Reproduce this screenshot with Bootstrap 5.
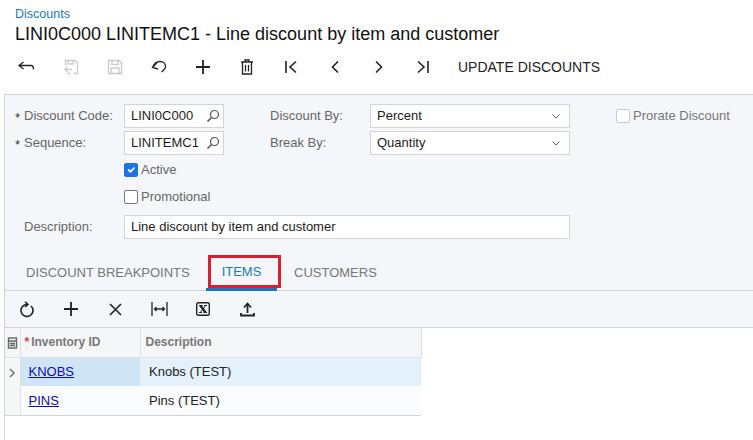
<!DOCTYPE html>
<html lang="en">
<head>
<meta charset="utf-8">
<title>Discounts</title>
<link href="https://cdn.jsdelivr.net/npm/bootstrap@5.3.0/dist/css/bootstrap.min.css" rel="stylesheet">
<style>
html,body{height:440px;overflow:hidden}
body{font-family:"Liberation Sans",Arial,sans-serif;font-size:13px;color:#212121;background:#fff}
.crumb{padding:7px 0 0 15px;height:45px}
.crumb-link{display:block;font-size:12.5px;line-height:15px;color:#1a7bb9;text-decoration:none}
.page-title{font-size:18px;line-height:24px;font-weight:400;color:#111;margin:0}
.top-bar{height:44px;padding-left:5px;margin-bottom:5px}
.tool{width:44px;height:36px;padding:0;border:0;background:none;display:flex;align-items:center;justify-content:center;color:#222}
.tool svg{fill:none;stroke:currentColor;stroke-width:1.3}
.tool .heavy{stroke-width:1.8}
.tool .mid{stroke-width:1.6}
.tool.off{color:#c9cbcd}
.top-action{margin-left:13px;font-size:14px;color:#222;background:none;border:0;padding:0}
.sheet{margin-left:4px;border-left:1px solid #d2d4d6;height:346px;display:flex;flex-direction:column}
.form-pane{background:#f4f6f9;border-top:1px solid #d2d4d6;padding:9px 0 0 10px;height:160px;flex:none}
.f-row{height:27px;align-items:flex-start}
.f-row.last{margin-top:3px}
.f-label{width:109px;line-height:24px;color:#666;font-size:13px;padding-left:9px;position:relative;flex:none}
.f-label.req::before{content:"*";position:absolute;left:0;top:2px;color:#333}
.f-input{height:24px;border:1px solid #d2d4d6;background:#fff;line-height:22px;padding-left:6px;font-size:13px;color:#1c1c1c;display:flex;align-items:center;justify-content:space-between;flex:none}
.f-lookup{width:100px;padding-right:3px}
.f-second{width:100px;margin-left:46px;line-height:24px;color:#666;font-size:13px;flex:none}
.f-select{width:200px;padding-right:9px}
.f-wide{width:446px}
.f-check{display:flex;align-items:center;gap:3px;color:#666;font-size:13px;line-height:24px}
.f-check .form-check-input{width:14px;height:14px;margin:0;border-color:#777;border-radius:2px;flex:none;background-color:#fff}
.f-check .form-check-input:checked{background-color:#1a73e8;border-color:#1a73e8}
.f-check .form-check-input:disabled{opacity:1;border-color:#ccc}
.f-check.muted{margin-left:46px;color:#777}
.f-indent{margin-left:109px}
.tab-strip{background:#f4f6f9;height:37px;border-bottom:1px solid #d2d4d6;flex:none;padding-left:4px}
.tab-item{height:34px;line-height:38px;padding:0 17px;color:#777;font-size:13px;position:relative;background:none;border:0}
.tab-item.first{width:197px;padding:0 0 0 17px;text-align:left}
.tab-item.current{width:71px;padding:0;text-align:center;color:#1a7bb9;height:37px;line-height:36px;border-bottom:3px solid #1a76b8}
.tab-item.next{padding-left:17px}
.callout{position:absolute;left:2px;top:1px;width:73px;height:33px;border:3px solid #d9202e;pointer-events:none}
.grid-bar{background:#f4f6f9;height:37px;border-bottom:1px solid #d2d4d6;flex:none}
.grid-wrap{width:416px;flex:none}
.grid-table{table-layout:fixed;width:416px;margin:0;font-size:13px}
.grid-table th,.grid-table td{padding:0;height:29px;vertical-align:middle;border:0;box-shadow:none}
.grid-table th{background:#f5f6f8;color:#777;font-weight:700;font-size:12px;border-right:1px solid #dfe1e3;padding-left:4px}
.grid-table th.sel{padding:0;text-align:center}
.grid-table th.desc-head{padding-left:5px}
.req-mark{margin-right:2px}
.grid-table td{color:#222;padding-left:8px}
.grid-table td.desc-cell{padding-left:9px}
.grid-table td.sel{background:#f5f6f8;border-right:1px solid #dfe1e3;padding:0;text-align:center}
.row-one td{background:#e4f0fa}
.row-one td.active-cell{background:#cfe5f6}
.row-one td{border-top:1px solid #dbe3ea}
.row-two td{background:#fbfcfe;border-bottom:1px solid #d2d4d6}
.grid-table a{color:#0b0bb8}
</style>
</head>
<body>
<div class="crumb">
  <a class="crumb-link" href="#">Discounts</a>
  <h1 class="page-title">LINI0C000 LINITEMC1 - Line discount by item and customer</h1>
</div>
<div class="top-bar d-flex align-items-center">
  <button class="tool" aria-label="Back"><svg width="19" height="12" viewBox="0 0 19 12"><path d="M5.500 1 1 4.500 5.500 8M1 4.500h12c1.500 0 2.500 1 2.500 4"/></svg></button>
  <button class="tool off" aria-label="Save and close"><svg width="16" height="16" viewBox="0 0 16 16"><path d="M2.500 7V1.500h9.500l2.500 2.500v10.500h-4M5 1.500v3.500h5V1.500M2 10.500h7M4.500 8 2 10.500 4.500 13M4.500 14.500h3"/></svg></button>
  <button class="tool off" aria-label="Save"><svg width="16" height="16" viewBox="0 0 16 16"><path d="M1.500 1.500h10.500l2.500 2.500v10.500H1.500zM5 1.500v4h6v-4M4 14.500V9h8v5.500"/></svg></button>
  <button class="tool" aria-label="Undo"><svg width="17" height="14" viewBox="0 0 17 14"><path d="M6 2.500 1.500 7.500 7 9M1.500 7.500C3 4 5.500 1.500 9 1.500c3.500 0 5.500 2.500 5.500 5 0 2.500-2 4-4 5.500"/></svg></button>
  <button class="tool" aria-label="Add"><svg width="16" height="16" viewBox="0 0 16 16"><path class="heavy" d="M8 1v14M1 8h14"/></svg></button>
  <button class="tool" aria-label="Delete"><svg width="14" height="16" viewBox="0 0 14 16"><path d="M1 3h12M5 3V1h4v2M2.500 3v12h9V3M5.500 6v6.500M8.500 6v6.500"/></svg></button>
  <button class="tool" aria-label="First"><svg class="mid" width="14" height="14" viewBox="0 0 14 14"><path d="M2 1v12M12 1.500 6 7l6 5.500"/></svg></button>
  <button class="tool" aria-label="Previous"><svg class="mid" width="10" height="14" viewBox="0 0 10 14"><path d="M8 1.500 2.500 7 8 12.500"/></svg></button>
  <button class="tool" aria-label="Next"><svg class="mid" width="10" height="14" viewBox="0 0 10 14"><path d="M2 1.500 7.500 7 2 12.500"/></svg></button>
  <button class="tool" aria-label="Last"><svg class="mid" width="14" height="14" viewBox="0 0 14 14"><path d="M12 1v12M2 1.500 8 7l-6 5.500"/></svg></button>
  <button class="top-action">UPDATE DISCOUNTS</button>
</div>
<div class="sheet">
  <div class="form-pane">
    <div class="d-flex f-row">
      <div class="f-label req">Discount Code:</div>
      <div class="f-input f-lookup"><span>LINI0C000</span><svg width="14" height="14" viewBox="0 0 14 14" fill="none" stroke="#555" stroke-width="1.200"><circle cx="8.500" cy="5.500" r="4"/><path d="M5.500 8.500 1.500 12.500" stroke-width="1.600"/></svg></div>
      <div class="f-second">Discount By:</div>
      <div class="f-input f-select"><span>Percent</span><svg width="8" height="5" viewBox="0 0 8 5" fill="none" stroke="#666"><path d="M.5.500 4 4 7.500.5"/></svg></div>
      <label class="f-check muted"><input class="form-check-input" type="checkbox" disabled><span>Prorate Discount</span></label>
    </div>
    <div class="d-flex f-row">
      <div class="f-label req">Sequence:</div>
      <div class="f-input f-lookup"><span>LINITEMC1</span><svg width="14" height="14" viewBox="0 0 14 14" fill="none" stroke="#555" stroke-width="1.200"><circle cx="8.500" cy="5.500" r="4"/><path d="M5.500 8.500 1.500 12.500" stroke-width="1.600"/></svg></div>
      <div class="f-second">Break By:</div>
      <div class="f-input f-select"><span>Quantity</span><svg width="8" height="5" viewBox="0 0 8 5" fill="none" stroke="#666"><path d="M.5.500 4 4 7.500.5"/></svg></div>
    </div>
    <div class="d-flex f-row"><label class="f-check f-indent"><input class="form-check-input" type="checkbox" checked><span>Active</span></label></div>
    <div class="d-flex f-row"><label class="f-check f-indent"><input class="form-check-input" type="checkbox"><span>Promotional</span></label></div>
    <div class="d-flex f-row last">
      <div class="f-label">Description:</div>
      <div class="f-input f-wide">Line discount by item and customer</div>
    </div>
  </div>
  <div class="tab-strip d-flex align-items-start">
    <div class="tab-item first">DISCOUNT BREAKPOINTS</div>
    <div class="tab-item current">ITEMS<span class="callout"></span></div>
    <div class="tab-item next">CUSTOMERS</div>
  </div>
  <div class="grid-bar d-flex align-items-center">
    <button class="tool" aria-label="Refresh"><svg class="mid" width="16" height="17" viewBox="0 0 16 17"><path d="M8.500 3.500A6 6 0 1 0 12 5"/><path d="M6 .8 9 3.500 6 6"/></svg></button>
    <button class="tool" aria-label="Add row"><svg width="16" height="16" viewBox="0 0 16 16"><path class="heavy" d="M8 1v14M1 8h14"/></svg></button>
    <button class="tool" aria-label="Delete row"><svg class="mid" width="13" height="13" viewBox="0 0 13 13"><path d="M1 1l11 11M12 1 1 12"/></svg></button>
    <button class="tool" aria-label="Fit to width"><svg width="17" height="14" viewBox="0 0 17 14"><path d="M1 0v14M16 0v14M3.500 7h10M5.500 5 3.500 7l2 2M11.500 5l2 2-2 2"/></svg></button>
    <button class="tool" aria-label="Export"><svg width="14" height="14" viewBox="0 0 14 14"><rect x=".7" y=".7" width="12.600" height="12.600" rx="1.500" stroke-width="1.400"/><path d="M4.500 3.500 9.500 10.500" stroke-width="2.400"/><path d="M9.800 3.500 4.200 10.500M3 3.500h3.500M8 3.500h3M3 10.500h3M7.500 10.500h3.500" stroke-width="1"/></svg></button>
    <button class="tool" aria-label="Upload"><svg width="15" height="15" viewBox="0 0 15 15"><path class="heavy" d="M7.500 11V3M4 5.500l3.500-4 3.500 4M1 11v2.500h13V11"/></svg></button>
  </div>
  <div class="grid-wrap">
    <table class="table grid-table">
      <colgroup><col style="width:15px"><col style="width:120px"><col style="width:281px"></colgroup>
      <thead>
        <tr>
          <th class="sel"><svg width="11" height="12" viewBox="0 0 11 12" fill="none" stroke="#666" stroke-width="1.400"><rect x="1.500" y="1" width="8" height="10"/><path d="M1.500 4h8M3 6.500h5M3 8.500h5"/></svg></th>
          <th><span class="text-danger req-mark">*</span>Inventory ID</th>
          <th class="desc-head">Description</th>
        </tr>
      </thead>
      <tbody>
        <tr class="row-one">
          <td class="sel"><svg width="7" height="10" viewBox="0 0 7 10" fill="none" stroke="#777" stroke-width="1.600"><path d="M1 1l4 4-4 4"/></svg></td>
          <td class="active-cell"><a href="#">KNOBS</a></td>
          <td class="desc-cell">Knobs (TEST)</td>
        </tr>
        <tr class="row-two">
          <td class="sel"></td>
          <td><a href="#">PINS</a></td>
          <td class="desc-cell">Pins (TEST)</td>
        </tr>
      </tbody>
    </table>
  </div>
</div>
<script src="https://cdn.jsdelivr.net/npm/bootstrap@5.3.0/dist/js/bootstrap.bundle.min.js"></script>
</body>
</html>
